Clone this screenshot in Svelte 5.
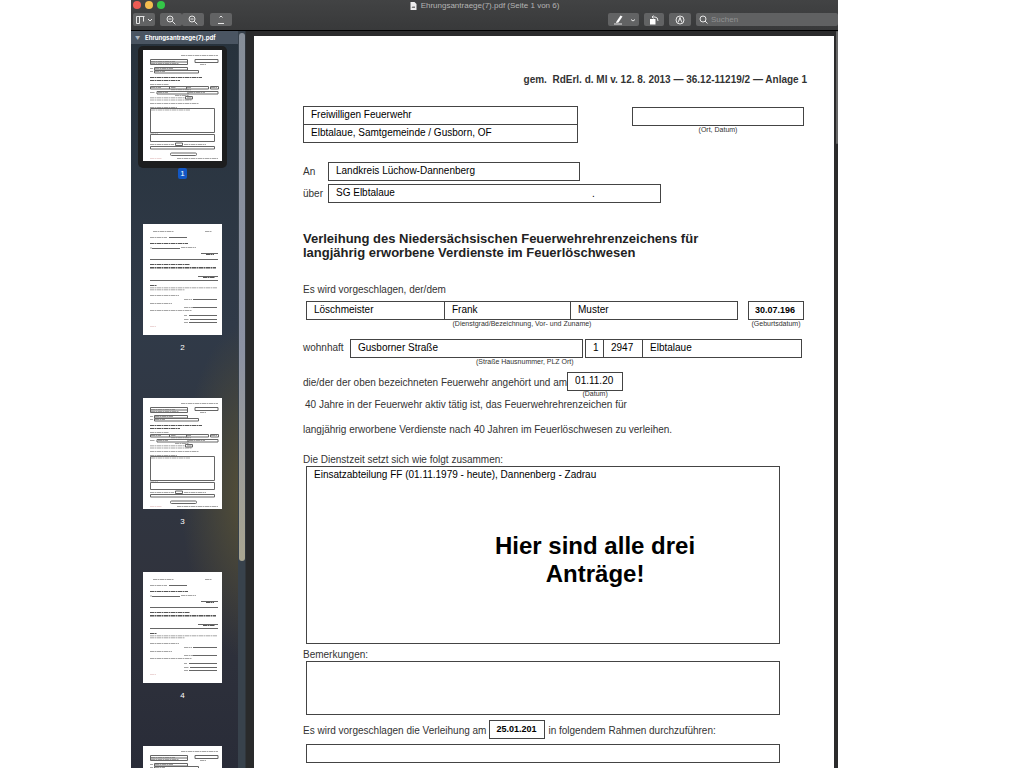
<!-- App.svelte -->
<script>
  const fileName = 'Ehrungsantraege(7).pdf';

  // Seitenvorschau in der Seitenleiste, die Nummer steht unter der Seite
  const pages = [
    { id: 1, kind: 'form', label: '1' },
    { id: 2, kind: 'text', label: '2' },
    { id: 3, kind: 'form', label: '3' },
    { id: 4, kind: 'text', label: '4' },
    { id: 5, kind: 'form', label: '' }
  ];

  let selected = $state(1);
  let search = $state('');

  let form = $state({
    feuerwehr: 'Freiwilligen Feuerwehr',
    einheit: 'Elbtalaue, Samtgemeinde / Gusborn, OF',
    ortDatum: '',
    an: 'Landkreis Lüchow-Dannenberg',
    ueber: 'SG Elbtalaue',
    dienstgrad: 'Löschmeister',
    vorname: 'Frank',
    name: 'Muster',
    geburt: '30.07.196',
    strasse: 'Gusborner Straße',
    nummer: '1',
    plz: '2947',
    ort: 'Elbtalaue',
    eintritt: '01.11.20',
    dienstzeit: 'Einsatzabteilung FF (01.11.1979 - heute), Dannenberg - Zadrau',
    bemerkungen: '',
    verleihung: '25.01.201',
    rahmen: ''
  });
</script>

{#snippet formPage()}
  <svg class="thumb" viewBox="0 0 79 111" aria-hidden="true">
    <g class="micro">
      <path d="M38 5.5h37M8 11.5h24M8 13.5h28M57 14.5h6M7 18.5h3M12 18.5h18M7 21.5h3M12 21.5h10" />
      <path class="strong" d="M7 27.5h52M7 30.5h30" />
      <path d="M7 34.5h19M8 37.5h10M28 37.5h5M44 37.5h4M68 37.5h6M28 39.7h20M7 42.5h5M15 42.5h10M46 42.5h16M32 45.5h14" />
      <path d="M7 47.8h35M44 47.8h5M7 50h42M7 53.5h49M7 57.5h27M8 60h39" />
      <path d="M7 83h8M7 94.5h24M41 94.5h22M34 108.5h41" />
      <path class="red" d="M7 108.5h12" />
    </g>
    <g class="boxes">
      <path d="M7.5 9.5h37v5h-37zM7.5 12h37M52 9.5h23v3h-23zM11.500 17.500h33v2.500h-33zM11.500 20.500h44v2.500h-44z" />
      <path d="M7.500 36.500h58v2.500h-58zM26.500 36.500v2.500M43.500 36.500v2.500M67.500 36.500h8v2.500h-8zM14 41.500h61v2.500h-61zM45 41.500v2.500M42.500 46.500h7v2.500h-7z" />
      <path d="M7.500 58.500h64v24h-64zM7.500 84.500h64v7h-64zM32.500 93h7v2.500h-7zM7.500 96.500h64v2.500h-64z" />
      <rect x="27.500" y="103" width="26" height="2.500" rx="1" />
    </g>
  </svg>
{/snippet}

{#snippet textPage()}
  <svg class="thumb" viewBox="0 0 79 111" aria-hidden="true">
    <g class="micro">
      <path d="M10 7.500h21M62 7.500h7M7 13.500h17M7 24h2M38 23.500h15M7 44.500h66" />
      <path class="strong" d="M7 19.500h38M7 40.500h40M7 43.500h66M7 61.500h7M63 30.500h8M60 53.500h12" />
      <path d="M7 63.800h67M7 65.800h35M7 71.500h29M41 75.500h8M7 79.500h22M41 83.500h9M7 86.500h42M41 91.500h3M41 95.500h5M41 98.500h4" />
      <path class="red" d="M7 102.500h6" />
    </g>
    <path class="rules" d="M26 13.500h18M9 24.500h28M58 29.500h17M7 35.500h68M55 52.500h20M7 56.500h68M50 75.500h24M50 83.500h24M46 91.500h28M47 95.500h27M46 98.500h28" />
  </svg>
{/snippet}

<div class="desktop">
  <main class="window">
    <header class="toolbar">
      <div class="lights">
        <button class="light close" aria-label="Schließen"></button>
        <button class="light minimize" aria-label="Minimieren"></button>
        <button class="light zoom" aria-label="Vergrößern"></button>
      </div>
      <h1 class="title">
        <svg width="7" height="8" viewBox="0 0 7 8" aria-hidden="true">
          <path d="M0.500 0h4l2 2v6h-6z" fill="#eee" />
          <path d="M1.500 6l1.500-2 1 1 1-1v2z" fill="#777" />
        </svg>
        {fileName} (Seite 1 von 6)
      </h1>
      <div class="tools">
        <button class="tool" aria-label="Seitenleiste">
          <svg width="18" height="10" viewBox="0 0 18 10">
            <path d="M1.500 8.500v-7h8M4.500 1.500v7M8.500 1.500v5M1.500 8.500h3" />
            <path d="M13 4l2 2 2-2" />
          </svg>
        </button>
        <div class="pair">
          <button class="tool" aria-label="Verkleinern">
            <svg width="12" height="10" viewBox="0 0 12 10">
              <circle cx="5" cy="4" r="3" />
              <path d="M3.500 4h3M7.300 6.300l3 3" />
            </svg>
          </button>
          <button class="tool" aria-label="Vergrößern">
            <svg width="12" height="10" viewBox="0 0 12 10">
              <circle cx="5" cy="4" r="3" />
              <path d="M3.500 4h3M7.300 6.300l3 3" />
            </svg>
          </button>
        </div>
        <button class="tool" aria-label="Teilen">
          <svg width="12" height="10" viewBox="0 0 12 10">
            <path d="M4.500 2.500l1.500-1.500 1.500 1.500M3 8.500h6" />
          </svg>
        </button>
        <div class="spacer"></div>
        <button class="tool wide" aria-label="Markieren">
          <svg width="24" height="10" viewBox="0 0 24 10">
            <path class="fill" d="M8.500 0.500l2 1-4 6-2.500 0.500 0.500-1.500z" />
            <path d="M2 9h8M19 4.500l2 1.500 2-1.500" />
          </svg>
        </button>
        <button class="tool narrow" aria-label="Drehen">
          <svg width="12" height="10" viewBox="0 0 12 10">
            <path class="fill" d="M2 4h5.500v5.500h-5.500z" />
            <path d="M4 2h3q3 0 3 4M5.500 0.500l-1.500 1.500 1.500 1.500" />
          </svg>
        </button>
        <button class="tool" aria-label="Anmerken">
          <svg width="12" height="10" viewBox="0 0 12 10">
            <circle cx="6" cy="5" r="4" />
            <path d="M4 7.500l2-5 2 5M6 2.500v3" />
          </svg>
        </button>
        <label class="search">
          <svg width="9" height="9" viewBox="0 0 9 9" aria-hidden="true">
            <circle cx="4" cy="4" r="3" />
            <path d="M6 6l2.500 2.500" />
          </svg>
          <input type="text" placeholder="Suchen" aria-label="Suchen" bind:value={search} />
        </label>
      </div>
    </header>

    <div class="content">
      <aside class="sidebar">
        <h2 class="doc-name"><span class="arrow">▼</span>{fileName}</h2>
        <div class="pages">
          {#each pages as page (page.id)}
            <button
              class="page"
              class:selected={page.id === selected}
              aria-label="Seite {page.id}"
              onclick={() => (selected = page.id)}
            >
              <span class="frame">
                {#if page.kind === 'form'}
                  {@render formPage()}
                {:else}
                  {@render textPage()}
                {/if}
              </span>
              {#if page.label}
                <span class="number">{page.label}</span>
              {/if}
            </button>
          {/each}
        </div>
      </aside>
      <div class="side-scroll"><div class="side-thumb"></div></div>

      <article class="paper">
        <p class="source">gem.&nbsp; RdErl. d. MI v. 12. 8. 2013 — 36.12-11219/2 — Anlage 1</p>

        <div class="top-row">
          <div class="stack">
            <input aria-label="Feuerwehr" bind:value={form.feuerwehr} />
            <input aria-label="Einheit" bind:value={form.einheit} />
          </div>
          <div class="place">
            <input id="ortDatum" bind:value={form.ortDatum} />
            <label class="caption" for="ortDatum">(Ort, Datum)</label>
          </div>
        </div>

        <div class="address">
          <label for="an">An</label>
          <input id="an" class="an" bind:value={form.an} />
          <label for="ueber">über</label>
          <div class="ueber">
            <input id="ueber" bind:value={form.ueber} />
            <span class="dot">.</span>
          </div>
        </div>

        <h2 class="heading">
          Verleihung des Niedersächsischen Feuerwehrehrenzeichens für<br />
          langjährig erworbene Verdienste im Feuerlöschwesen
        </h2>

        <p class="intro">Es wird vorgeschlagen, der/dem</p>

        <div class="person">
          <div>
            <div class="names">
              <input aria-label="Dienstgrad" bind:value={form.dienstgrad} />
              <input aria-label="Vorname" bind:value={form.vorname} />
              <input aria-label="Zuname" bind:value={form.name} />
            </div>
            <p class="caption">(Dienstgrad/Bezeichnung, Vor- und Zuname)</p>
          </div>
          <div>
            <input id="geburt" class="date small" bind:value={form.geburt} />
            <label class="caption" for="geburt">(Geburtsdatum)</label>
          </div>
        </div>

        <div class="home">
          <label for="strasse">wohnhaft</label>
          <div>
            <input id="strasse" bind:value={form.strasse} />
            <p class="caption street">(Straße Hausnummer, PLZ Ort)</p>
          </div>
          <div class="town">
            <input class="house" aria-label="Hausnummer" bind:value={form.nummer} />
            <input aria-label="PLZ" bind:value={form.plz} />
            <input aria-label="Ort" bind:value={form.ort} />
          </div>
        </div>

        <div class="inline since">
          <label for="eintritt">die/der der oben bezeichneten Feuerwehr angehört und am</label>
          <div>
            <input id="eintritt" class="date" bind:value={form.eintritt} />
            <p class="caption">(Datum)</p>
          </div>
        </div>

        <p class="active">40 Jahre in der Feuerwehr aktiv tätig ist, das Feuerwehrehrenzeichen für</p>
        <p class="merit">langjährig erworbene Verdienste nach 40 Jahren im Feuerlöschwesen zu verleihen.</p>

        <label class="area-label" for="dienstzeit">Die Dienstzeit setzt sich wie folgt zusammen:</label>
        <div class="service">
          <textarea id="dienstzeit" bind:value={form.dienstzeit}></textarea>
          <p class="note">Hier sind alle drei<br />Anträge!</p>
        </div>

        <label class="area-label remarks-label" for="bemerkungen">Bemerkungen:</label>
        <textarea id="bemerkungen" class="remarks" bind:value={form.bemerkungen}></textarea>

        <div class="inline award">
          <label for="verleihung">Es wird vorgeschlagen die Verleihung am</label>
          <input id="verleihung" class="date small" bind:value={form.verleihung} />
          <span>in folgendem Rahmen durchzuführen:</span>
        </div>
        <input class="occasion" aria-label="Rahmen" bind:value={form.rahmen} />
      </article>
      <div class="main-scroll"><div class="main-thumb"></div></div>
    </div>
  </main>
</div>

<style>
  :global(body) {
    background: #fff;
  }

  * {
    box-sizing: border-box;
  }

  h1, h2, p {
    margin: 0;
  }

  button {
    padding: 0;
    border: 0;
    font: inherit;
    color: inherit;
    background: none;
  }

  .desktop {
    height: 100vh;
    padding: 0 186px 0 131px;
    overflow: hidden;
    font-family: "Liberation Sans", Arial, sans-serif;
  }

  .window {
    display: flex;
    flex-direction: column;
    height: 100%;
    background: #2b2b2c;
  }

  /* Titelleiste und Werkzeuge */
  .toolbar {
    position: relative;
    flex: none;
    height: 31px;
    background: linear-gradient(#424344, #38393a);
    border-bottom: 1px solid #000;
  }

  .lights {
    position: absolute;
    top: 1px;
    left: 2px;
    display: flex;
    gap: 4px;
  }

  .light {
    width: 8px;
    height: 8px;
    border-radius: 50%;
  }

  .close { background: #ee5c54; }
  .minimize { background: #f5bd4f; }
  .zoom { background: #34c648; }

  .title {
    display: flex;
    justify-content: center;
    align-items: center;
    gap: 4px;
    height: 11px;
    font-size: 8px;
    font-weight: normal;
    color: #b4b4b4;
  }

  .tools {
    display: flex;
    gap: 5px;
    padding: 2px 0 0 2px;
  }

  .tool {
    display: flex;
    align-items: center;
    justify-content: center;
    width: 22px;
    height: 13px;
    border-radius: 2px;
    background: #626364;
  }

  .tool.wide {
    width: 31px;
  }

  .tool.narrow {
    width: 20px;
  }

  .pair {
    display: flex;
    margin-right: 1px;
  }

  .tools svg {
    flex: none;
    fill: none;
    stroke: #e6e6e6;
    stroke-width: 1;
  }

  .tools .fill {
    fill: #fff;
    stroke: none;
  }

  .spacer {
    flex: 1;
  }

  .search {
    display: flex;
    align-items: center;
    gap: 3px;
    width: 142px;
    height: 13px;
    padding-left: 3px;
    border-radius: 2px;
    background: #606162;
  }

  .search input {
    width: 100%;
    height: 13px;
    padding: 0;
    border: 0;
    font-family: inherit;
    font-size: 8px;
    color: #ddd;
    background: none;
  }

  .search input::placeholder {
    color: #909192;
  }

  .content {
    display: flex;
    flex: 1;
    min-height: 0;
  }

  /* Seitenleiste */
  .sidebar {
    flex: none;
    width: 107px;
    overflow: hidden;
    background:
      radial-gradient(ellipse 70px 170px at 120px 460px, #575136, transparent),
      linear-gradient(#27323c, #303a48 40%, #30333d 75%, #292c38);
    color: #fff;
  }

  .doc-name {
    display: flex;
    align-items: center;
    height: 13px;
    padding-left: 4px;
    font-family: Inter, sans-serif;
    font-size: 6px;
    font-weight: bold;
    background: #4a5562;
  }

  .arrow {
    width: 10px;
    font-size: 5px;
    color: #aeb6bf;
  }

  .pages {
    display: flex;
    flex-direction: column;
    padding-top: 2px;
  }

  .page {
    display: flex;
    flex-direction: column;
    align-items: center;
    flex: none;
    height: 174px;
    padding-right: 4px;
  }

  .frame {
    padding: 4px 5px 7px;
    border-radius: 5px;
  }

  .selected .frame {
    background: #1d1e1f;
  }

  .thumb {
    display: block;
    width: 79px;
    height: 111px;
    background: #fff;
  }

  .micro {
    fill: none;
    stroke: #a6a6a6;
    stroke-width: 1;
    stroke-dasharray: 4 0.5 2 0.5;
  }

  .micro .strong {
    stroke: #555;
  }

  .micro .red {
    stroke: #ecd6d6;
  }

  .boxes, .rules {
    fill: none;
    stroke: #666;
    stroke-width: 1;
  }

  .number {
    padding: 0 2px;
    font-size: 8px;
    line-height: 11px;
  }

  .selected .number {
    border-radius: 2px;
    background: #1257c4;
  }

  .side-scroll {
    flex: none;
    width: 16px;
    padding: 2px 9px 0 1px;
    background: linear-gradient(90deg, #38424c 7px, #292a2b 8px);
  }

  .side-thumb {
    height: 528px;
    border-radius: 3px;
    background: linear-gradient(#868e98, #8c92a3 60%, #aaa691);
  }

  .main-scroll {
    flex: none;
    width: 4px;
    padding-left: 2px;
  }

  .main-thumb {
    height: 113px;
    border-radius: 2px;
    background: #666;
  }

  /* Antragsformular */
  .paper {
    flex: 1;
    min-width: 0;
    margin-top: 5px;
    padding: 37px 30px 0 49px;
    overflow: hidden;
    background: #fff;
    color: #333;
    font-size: 10px;
    line-height: 12px;
  }

  .paper label, .paper p, .paper span {
    white-space: nowrap;
  }

  .paper input, .paper textarea {
    display: block;
    width: 100%;
    margin: 0;
    padding: 0 7px;
    border: 1px solid #444;
    border-radius: 0;
    outline: none;
    background: #fff;
    color: #000;
    font-family: inherit;
    font-size: 10px;
  }

  .paper input {
    height: 19px;
    padding-bottom: 2px;
  }

  .paper textarea {
    padding-top: 2px;
    line-height: 12px;
    resize: none;
  }

  .paper input.date {
    width: 56px;
  }

  .paper input.small {
    padding-left: 6px;
    font-size: 9px;
    font-weight: bold;
  }

  .paper input.house {
    padding-right: 2px;
  }

  .paper .caption {
    display: block;
    font-size: 7px;
    line-height: 8px;
    text-align: center;
  }

  .paper .source {
    margin-right: -3px;
    font-size: 10px;
    line-height: 14px;
    font-weight: bold;
    text-align: right;
  }

  .top-row {
    display: grid;
    grid-template-columns: 275fr 172fr;
    gap: 54px;
    margin-top: 19px;
  }

  .stack input + input {
    margin-top: -1px;
  }

  .place {
    padding-top: 1px;
  }

  .address {
    display: grid;
    grid-template-columns: 25px 1fr;
    align-items: center;
    gap: 3px 0;
    margin-top: 19px;
  }

  .paper .an {
    width: 53%;
  }

  .ueber {
    position: relative;
    width: 70%;
  }

  .dot {
    position: absolute;
    top: 4px;
    left: 264px;
    color: #000;
  }

  .heading {
    margin-top: 29px;
    font-size: 13px;
    line-height: 14px;
    color: #222;
    white-space: nowrap;
  }

  .intro {
    margin-top: 24px;
  }

  .person {
    display: grid;
    grid-template-columns: 432fr 56px;
    gap: 10px;
    margin-top: 5px;
    padding-left: 3px;
  }

  .names {
    display: grid;
    grid-template-columns: 139fr 126fr 167fr;
  }

  .names input + input, .town input + input {
    border-left-width: 0;
  }

  .home {
    display: grid;
    grid-template-columns: 45px 233fr 217fr;
    column-gap: 2px;
    margin-top: 11px;
    padding-right: 2px;
  }

  .home > label {
    padding-top: 3px;
  }

  .home .street {
    padding-left: 126px;
    text-align: left;
  }

  .town {
    display: grid;
    grid-template-columns: 19px 39px 1fr;
  }

  .inline {
    display: flex;
    align-items: flex-start;
    gap: 3px;
  }

  .inline > label, .inline > span {
    padding-top: 5px;
  }

  .since {
    gap: 0;
    margin-top: 6px;
  }

  .since .caption {
    line-height: 6px;
  }

  .active {
    margin-top: 2px;
    padding-left: 2px;
  }

  .merit {
    margin-top: 13px;
  }

  .area-label {
    display: block;
    margin-top: 17px;
    line-height: 13px;
  }

  .service {
    position: relative;
    margin-left: 3px;
    width: calc(100% - 27px);
  }

  .paper .remarks, .paper .occasion {
    margin-left: 3px;
    width: calc(100% - 27px);
  }

  .service textarea {
    height: 178px;
  }

  .note {
    position: absolute;
    top: 66px;
    left: 189px;
    font-size: 24px;
    font-weight: bold;
    line-height: 28px;
    text-align: center;
    color: #000;
  }

  .remarks-label {
    margin-top: 4px;
  }

  .remarks {
    height: 54px;
  }

  .award {
    margin-top: 5px;
  }

  .paper .occasion {
    margin-top: 5px;
  }
</style>
